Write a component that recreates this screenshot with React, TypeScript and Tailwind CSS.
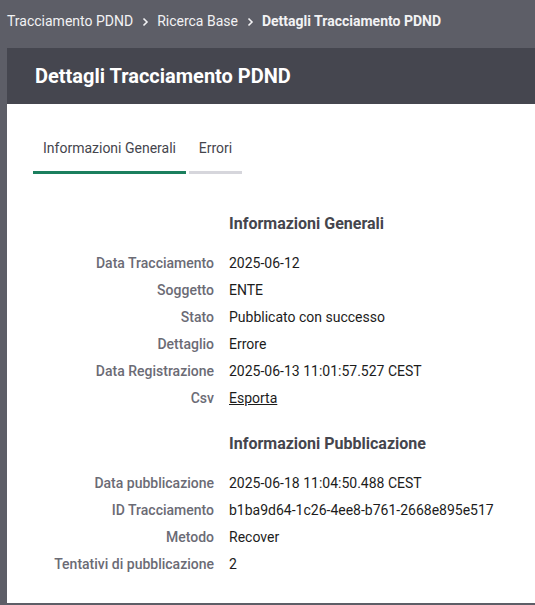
import React from "react";

const generali: [string, React.ReactNode][] = [
  ["Data Tracciamento", "2025-06-12"],
  ["Soggetto", "ENTE"],
  ["Stato", "Pubblicato con successo"],
  ["Dettaglio", "Errore"],
  ["Data Registrazione", "2025-06-13 11:01:57.527 CEST"],
  ["Csv", <a className="underline cursor-pointer">Esporta</a>],
];

const pubblicazione: [string, React.ReactNode][] = [
  ["Data pubblicazione", "2025-06-18 11:04:50.488 CEST"],
  ["ID Tracciamento", "b1ba9d64-1c26-4ee8-b761-2668e895e517"],
  ["Metodo", "Recover"],
  ["Tentativi di pubblicazione", "2"],
];

const Chevron = () => (
  <svg width="8" height="10" viewBox="0 0 8 10" className="mx-[8px]">
    <path d="M2.5 1.5 L6 5 L2.5 8.5" fill="none" stroke="#f2f2f4" strokeWidth="1.6" />
  </svg>
);

const Section = ({ title, rows }: { title: string; rows: [string, React.ReactNode][] }) => (
  <div>
    <div className="flex h-[38px] items-center">
      <div className="w-[222px] shrink-0" />
      <h3 className="text-[16px] font-bold text-[#45454d]">{title}</h3>
    </div>
    <div className="mt-[7px] flex flex-col">
      {rows.map(([label, value]) => (
        <div key={label} className="flex h-[27px] items-center text-[14px]">
          <div className="w-[207px] shrink-0 text-right font-medium text-[#6b6b75]">{label}</div>
          <div className="ml-[15px] text-[#1c1c1c]">{value}</div>
        </div>
      ))}
    </div>
  </div>
);

export default function App() {
  return (
    <div className="min-h-[605px] bg-[#5d5e67] font-['Roboto',sans-serif]">
      <nav className="flex h-[43px] items-center pl-[7px] text-[14px] text-[#f2f2f4]">
        <span>Tracciamento PDND</span>
        <Chevron />
        <span>Ricerca Base</span>
        <Chevron />
        <span className="font-bold">Dettagli Tracciamento PDND</span>
      </nav>
      <div className="ml-[7px] mt-[5px]">
        <div className="flex h-[56px] items-center bg-[#45464f] pl-[28px]">
          <h1 className="text-[20px] font-bold text-white">Dettagli Tracciamento PDND</h1>
        </div>
        <div className="h-[499px] bg-white pl-[26px]">
          <div className="flex gap-[3px] pt-[30px]">
            <div className="flex h-[40px] w-[153px] items-start justify-center border-b-[3px] border-[#1b7f5e] pt-[4px] text-[14px] text-[#45454d]">
              Informazioni Generali
            </div>
            <div className="flex h-[40px] w-[53px] items-start justify-center border-b-[3px] border-[#d6d6dc] pt-[4px] text-[14px] text-[#45454d]">
              Errori
            </div>
          </div>
          <div className="-ml-[26px] mt-[31px]">
            <Section title="Informazioni Generali" rows={generali} />
            <div className="h-[13px]" />
            <Section title="Informazioni Pubblicazione" rows={pubblicazione} />
          </div>
        </div>
      </div>
    </div>
  );
}
